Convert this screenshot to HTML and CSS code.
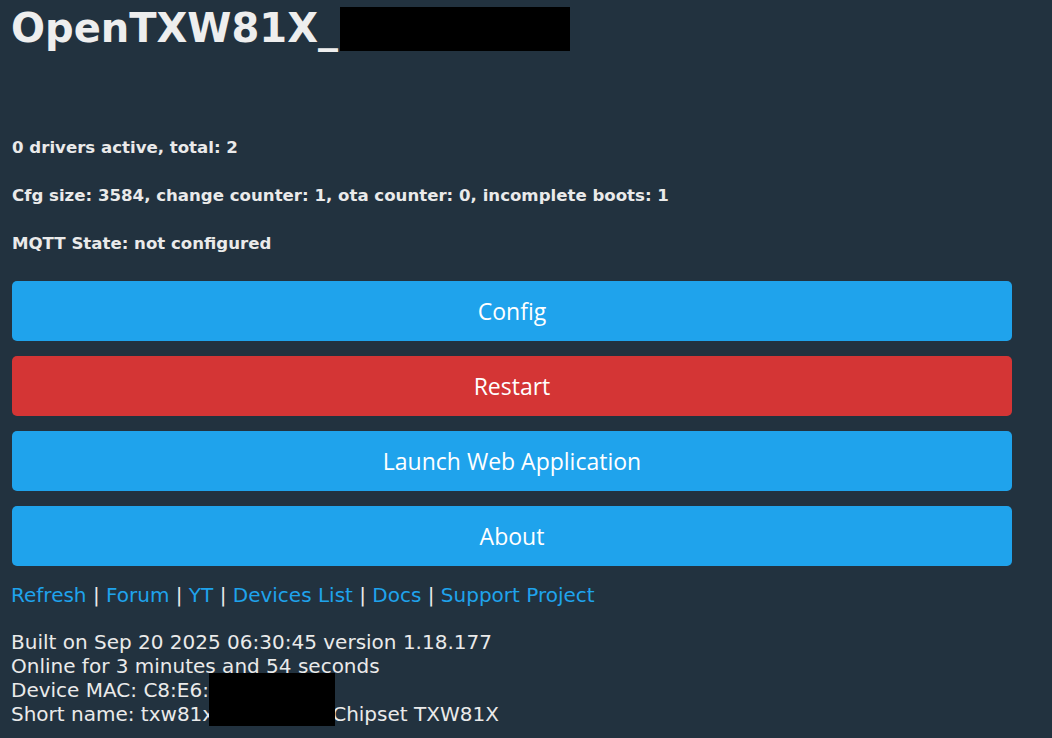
FILE: index.html
```html
<!DOCTYPE html>
<html lang="en">
<head>
  <meta charset="UTF-8" />
  <meta name="viewport" content="width=device-width, initial-scale=1.0"/>
  <title>OpenTXW81X</title>
  <link rel="stylesheet" href="styles.css">
</head>
<body>
  <div class="page">
    <!-- Device name -->
    <h1 class="title">OpenTXW81X_<span class="redact redact-title"></span></h1>

    <!-- Status lines -->
    <div class="status">
      <h5>0 drivers active, total: 2</h5>
      <h5>Cfg size: 3584, change counter: 1, ota counter: 0, incomplete boots: 1</h5>
      <h5>MQTT State: not configured</h5>
    </div>

    <!-- Main actions -->
    <div class="actions">
      <button class="btn">Config</button>
      <button class="btn btn-red">Restart</button>
      <button class="btn">Launch Web Application</button>
      <button class="btn">About</button>
    </div>

    <div class="links">
      <a href="#">Refresh</a> | <a href="#">Forum</a> | <a href="#">YT</a> | <a href="#">Devices List</a> | <a href="#">Docs</a> | <a href="#">Support Project</a>
    </div>

    <div class="info">
      <div>Built on Sep 20 2025 06:30:45 version 1.18.177</div>
      <div>Online for 3 minutes and 54 seconds</div>
      <div>Device MAC: C8:E6:</div>
      <div>Short name: txw81x<span class="gap"></span>Chipset TXW81X</div>
      <!-- redacted block over MAC / short name -->
      <span class="redact redact-info"></span>
    </div>
  </div>
</body>
</html>
```

FILE: styles.css
```css
:root {
  --bg: #22323f;
  --text: #eaeaea;
  --blue: #1fa3ec;
  --red: #d43535;
}

* {
  box-sizing: border-box;
}

body {
  margin: 0;
  background-color: var(--bg);
  color: var(--text);
  font-family: 'DejaVu Sans', Verdana, sans-serif;
  font-size: 20px;
  overflow: hidden;
}

.page {
  padding: 4px 10px 0 12px;
}

.title {
  margin: 0 0 86px -1px;
  font-size: 40px;
  line-height: 48px;
  font-weight: bold;
  white-space: nowrap;
  color: #eeeeee;
}

.redact {
  display: inline-block;
  background: #000;
}

.redact-title {
  width: 230px;
  height: 44px;
  vertical-align: -9px;
  margin-left: 2px;
}

.status h5 {
  margin: 0 0 28px 0;
  font-size: 16.6px;
  line-height: 20px;
  font-weight: bold;
}

.status h5:last-child {
  margin-bottom: 27px;
}

.actions {
  display: flex;
  flex-direction: column;
  gap: 15px;
}

.btn {
  width: 1000px;
  height: 60px;
  border: 0;
  border-radius: 5px;
  background: var(--blue);
  color: #fff;
  font-family: 'Open Sans', sans-serif;
  font-size: 23px;
  cursor: pointer;
}

.btn-red {
  background: var(--red);
}

.links {
  margin-top: 17px;
  margin-left: -1px;
  line-height: 24px;
}

.links a {
  color: var(--blue);
  text-decoration: none;
}

.info {
  position: relative;
  margin-top: 23px;
  margin-left: -1px;
  line-height: 24px;
}

.gap {
  display: inline-block;
  width: 118px;
}

.redact-info {
  position: absolute;
  left: 198px;
  top: 43px;
  width: 126px;
  height: 55px;
}
```
